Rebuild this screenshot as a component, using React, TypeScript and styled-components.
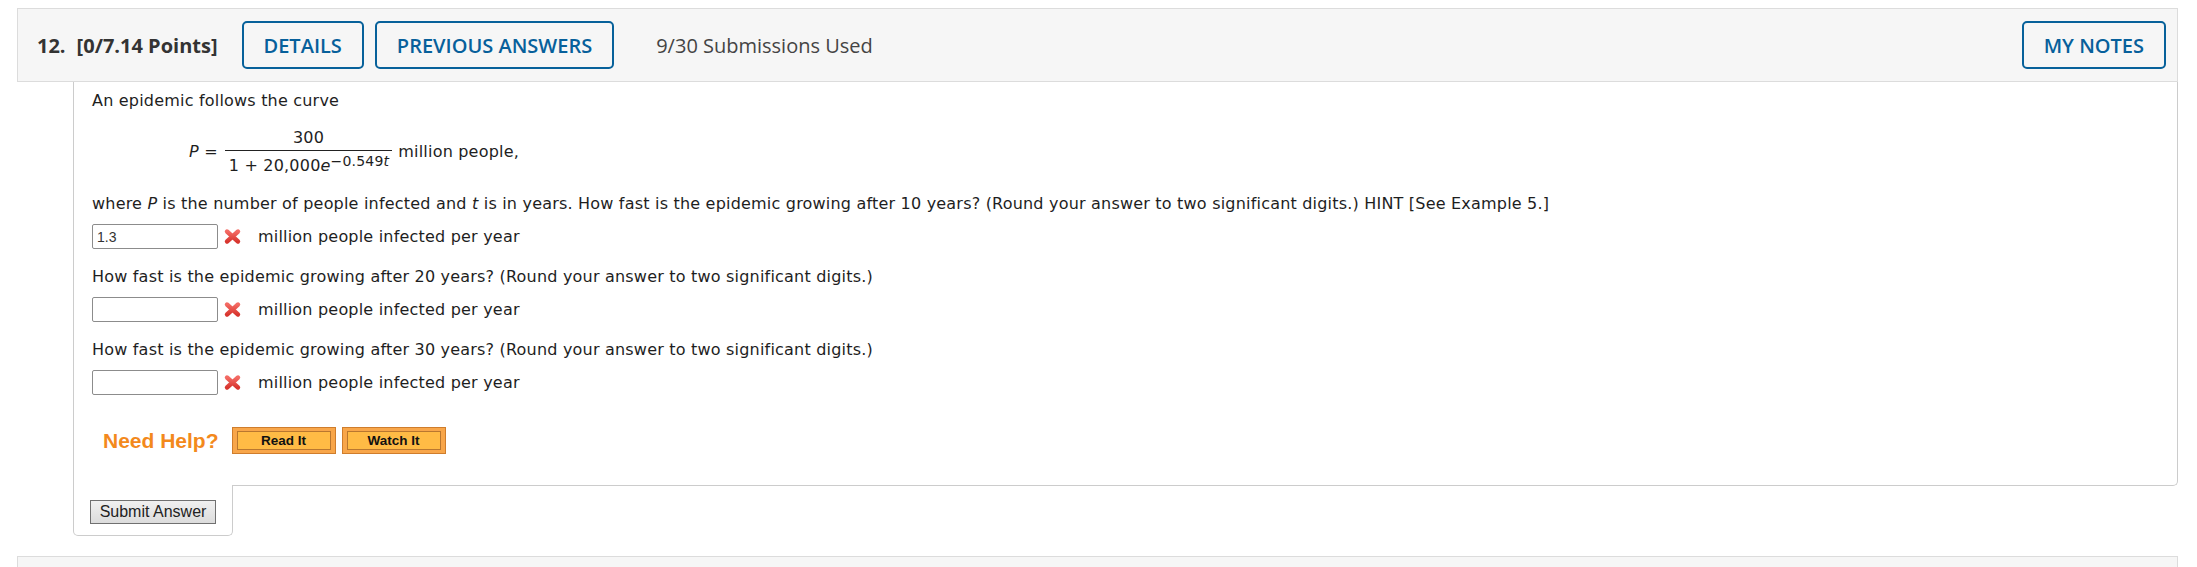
import React from "react";
import styled, { createGlobalStyle } from "styled-components";

const Global = createGlobalStyle`
  html, body {
    margin: 0;
    padding: 0;
    background: #ffffff;
    overflow: hidden;
  }
`;

const Page = styled.div`
  padding: 8px 19px 0 17px;
`;

const Header = styled.div`
  display: flex;
  align-items: center;
  height: 74px;
  box-sizing: border-box;
  padding: 0 11px 0 19px;
  border: 1px solid #dcdcdc;
  background: #f6f6f6;
  font-family: "Open Sans", "Liberation Sans", sans-serif;
`;

const QNum = styled.span`
  font-size: 20px;
  font-weight: 700;
  color: #333333;
  margin-right: 11px;
`;

const Points = styled.span`
  font-size: 20px;
  font-weight: 700;
  color: #333333;
  margin-right: 24px;
`;

const OutlineButton = styled.button<{ $push?: boolean }>`
  height: 48px;
  box-sizing: border-box;
  padding: 0 20px;
  margin-left: ${(p) => (p.$push ? "auto" : "0")};
  border: 2px solid #07619a;
  border-radius: 5px;
  background: transparent;
  color: #07609b;
  font-family: "Open Sans", "Liberation Sans", sans-serif;
  font-size: 20px;
  font-weight: 600;
  cursor: pointer;
  & + & {
    margin-left: 11px;
  }
`;

const Submissions = styled.span`
  margin-left: 42px;
  font-size: 20px;
  color: #444444;
`;

const Body = styled.div`
  margin-left: 56px;
`;

const Panel = styled.div`
  border: 1px solid #cccccc;
  border-top: none;
  border-bottom-right-radius: 5px;
  padding: 9px 18px 31px 18px;
  font-family: Verdana, "DejaVu Sans", sans-serif;
  font-size: 16px;
  letter-spacing: 0.2px;
  line-height: 20px;
  color: #1e1e1e;
`;

const Para = styled.div`
  margin: 0;
`;

const Formula = styled.div`
  display: flex;
  align-items: center;
  margin: 17px 0 18px 97px;
`;

const Lhs = styled.span`
  margin-right: 7px;
  white-space: pre;
`;

const Fraction = styled.span`
  display: inline-flex;
  flex-direction: column;
  align-items: stretch;
  text-align: center;
`;

const Numer = styled.span`
  padding-bottom: 2px;
  border-bottom: 1px solid #222222;
`;

const Denom = styled.span`
  padding: 5px 3px 0 4px;
  white-space: nowrap;
`;

const Sup = styled.sup`
  font-size: 14px;
  vertical-align: 5px;
  line-height: 0;
`;

const Rhs = styled.span`
  margin-left: 6px;
`;

const Question = styled.div`
  margin-bottom: 10px;
`;

const AnswerRow = styled.div<{ $last?: boolean }>`
  display: flex;
  align-items: center;
  height: 25px;
  margin-bottom: ${(p) => (p.$last ? "0" : "18px")};
`;

const AnswerInput = styled.input`
  width: 126px;
  height: 25px;
  box-sizing: border-box;
  margin: 0;
  padding: 0 4px;
  border: 1px solid #8c8c8c;
  border-radius: 2px;
  font-family: "Liberation Sans", Arial, sans-serif;
  font-size: 14px;
  letter-spacing: 0;
  color: #333333;
  background: #ffffff;
`;

const Mark = styled.svg`
  width: 19px;
  height: 17px;
  margin: 0 16px 0 5px;
  flex: none;
`;

const Units = styled.span``;

const HelpRow = styled.div`
  display: flex;
  align-items: center;
  margin-top: 32px;
  padding-left: 11px;
  letter-spacing: 0;
`;

const NeedHelp = styled.span`
  font-family: "Liberation Sans", Arial, sans-serif;
  font-size: 21px;
  font-weight: 700;
  color: #f3891c;
  margin-right: 13px;
`;

const HelpButton = styled.button`
  display: flex;
  height: 27px;
  width: 104px;
  box-sizing: border-box;
  margin: 0;
  padding: 3px 4px;
  border: 1px solid #cf7d2c;
  background: #f8a64a;
  cursor: pointer;
  & + & {
    margin-left: 6px;
  }
`;

const HelpLabel = styled.span`
  flex: 1;
  display: flex;
  align-items: center;
  justify-content: center;
  border: 1px solid #b9772f;
  background: #ffbb45;
  font-family: "Liberation Sans", Arial, sans-serif;
  font-size: 13.5px;
  font-weight: 700;
  color: #111111;
`;

const SubmitTab = styled.div`
  width: 160px;
  box-sizing: border-box;
  margin-top: -1px;
  padding: 15px 0 11px 16px;
  border: 1px solid #cccccc;
  border-top: none;
  border-radius: 0 0 5px 5px;
  background: #ffffff;
`;

const SubmitButton = styled.button`
  display: block;
  width: 126px;
  height: 24px;
  box-sizing: border-box;
  margin: 0;
  padding: 0;
  border: 1px solid #707070;
  background: linear-gradient(#f0f0f0, #dcdcdc);
  font-family: "Liberation Sans", Arial, sans-serif;
  font-size: 16px;
  color: #222222;
`;

const NextHeader = styled.div`
  margin-top: 20px;
  height: 74px;
  border: 1px solid #dcdcdc;
  background: #f6f6f6;
`;

function WrongMark() {
  return (
    <Mark viewBox="0 0 19 17">
      <defs>
        <linearGradient id="xg" x1="0" y1="0" x2="0" y2="1">
          <stop offset="0" stopColor="#f36a63" />
          <stop offset="1" stopColor="#d8362f" />
        </linearGradient>
      </defs>
      <path
        d="M4 3.5 L15 13.5 M15 3.5 L4 13.5"
        stroke="url(#xg)"
        strokeWidth="4.4"
        strokeLinecap="round"
        fill="none"
      />
    </Mark>
  );
}

function Answer({ value, last }: { value?: string; last?: boolean }) {
  return (
    <AnswerRow $last={last}>
      <AnswerInput defaultValue={value ?? ""} />
      <WrongMark />
      <Units>million people infected per year</Units>
    </AnswerRow>
  );
}

export default function App() {
  return (
    <>
      <Global />
      <Page>
        <Header>
          <QNum>12.</QNum>
          <Points>[0/7.14 Points]</Points>
          <OutlineButton>DETAILS</OutlineButton>
          <OutlineButton>PREVIOUS ANSWERS</OutlineButton>
          <Submissions>9/30 Submissions Used</Submissions>
          <OutlineButton $push>MY NOTES</OutlineButton>
        </Header>
        <Body>
          <Panel>
            <Para>An epidemic follows the curve</Para>
            <Formula>
              <Lhs>
                <i>P</i> =
              </Lhs>
              <Fraction>
                <Numer>300</Numer>
                <Denom>
                  1 + 20,000<i>e</i>
                  <Sup>
                    −0.549<i>t</i>
                  </Sup>
                </Denom>
              </Fraction>
              <Rhs>million people,</Rhs>
            </Formula>
            <Question>
              where <i>P</i> is the number of people infected and <i>t</i> is in
              years. How fast is the epidemic growing after 10 years? (Round your
              answer to two significant digits.) HINT [See Example 5.]
            </Question>
            <Answer value="1.3" />
            <Question>
              How fast is the epidemic growing after 20 years? (Round your answer
              to two significant digits.)
            </Question>
            <Answer />
            <Question>
              How fast is the epidemic growing after 30 years? (Round your answer
              to two significant digits.)
            </Question>
            <Answer last />
            <HelpRow>
              <NeedHelp>Need Help?</NeedHelp>
              <HelpButton>
                <HelpLabel>Read It</HelpLabel>
              </HelpButton>
              <HelpButton>
                <HelpLabel>Watch It</HelpLabel>
              </HelpButton>
            </HelpRow>
          </Panel>
          <SubmitTab>
            <SubmitButton>Submit Answer</SubmitButton>
          </SubmitTab>
        </Body>
        <NextHeader />
      </Page>
    </>
  );
}
